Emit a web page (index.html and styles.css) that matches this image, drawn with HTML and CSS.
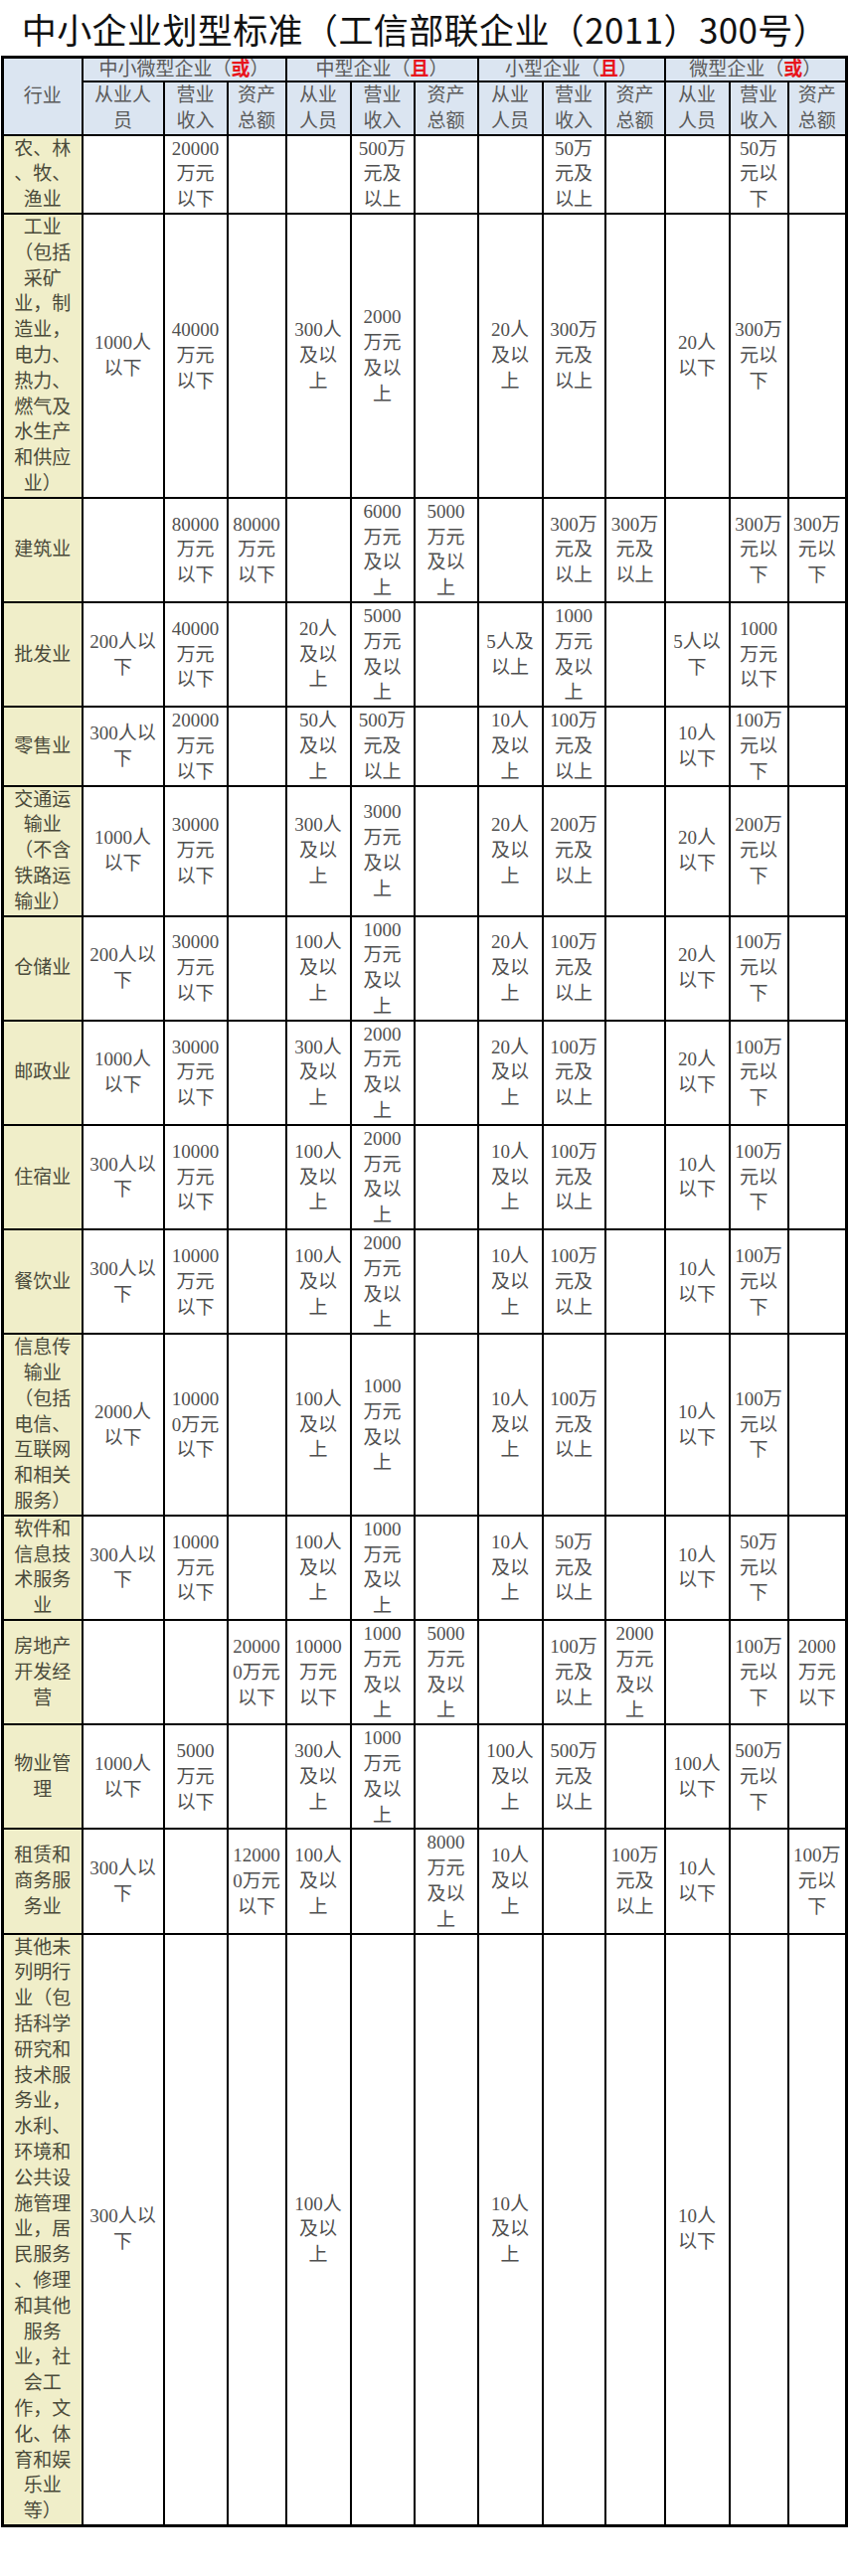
FILE: index.html
```html
<!DOCTYPE html>
<html lang="zh-CN">
<head>
<meta charset="utf-8">
<title>中小企业划型标准</title>
<link rel="stylesheet" href="styles.css">
</head>
<body>
<div class="title">中小企业划型标准（工信部联企业（2011）300号）</div>
<table class="grid">
<colgroup>
<col class="c-ind"><col class="c1"><col class="c2"><col class="c3"><col class="c4"><col class="c5"><col class="c6"><col class="c7"><col class="c8"><col class="c9"><col class="c10"><col class="c11"><col class="c12">
</colgroup>
<thead>
<tr class="hd1">
<th rowspan="2" class="hind">行业</th>
<th colspan="3">中小微型企业（<b class="red">或</b>）</th>
<th colspan="3">中型企业（<b class="red">且</b>）</th>
<th colspan="3">小型企业（<b class="red">且</b>）</th>
<th colspan="3">微型企业（<b class="red">或</b>）</th>
</tr>
<tr class="hd2">
<th>从业人<br>员</th><th>营业<br>收入</th><th>资产<br>总额</th>
<th>从业<br>人员</th><th>营业<br>收入</th><th>资产<br>总额</th>
<th>从业<br>人员</th><th>营业<br>收入</th><th>资产<br>总额</th>
<th>从业<br>人员</th><th>营业<br>收入</th><th>资产<br>总额</th>
</tr>
</thead>
<tbody>
<tr>
<td class="ind">农、林<br>、牧、<br>渔业</td>
<td></td><td>20000<br>万元<br>以下</td><td></td>
<td></td><td>500万<br>元及<br>以上</td><td></td>
<td></td><td>50万<br>元及<br>以上</td><td></td>
<td></td><td>50万<br>元以<br>下</td><td></td>
</tr>
<tr>
<td class="ind">工业<br>（包括<br>采矿<br>业，制<br>造业，<br>电力、<br>热力、<br>燃气及<br>水生产<br>和供应<br>业）</td>
<td>1000人<br>以下</td><td>40000<br>万元<br>以下</td><td></td>
<td>300人<br>及以<br>上</td><td>2000<br>万元<br>及以<br>上</td><td></td>
<td>20人<br>及以<br>上</td><td>300万<br>元及<br>以上</td><td></td>
<td>20人<br>以下</td><td>300万<br>元以<br>下</td><td></td>
</tr>
<tr>
<td class="ind">建筑业</td>
<td></td><td>80000<br>万元<br>以下</td><td>80000<br>万元<br>以下</td>
<td></td><td>6000<br>万元<br>及以<br>上</td><td>5000<br>万元<br>及以<br>上</td>
<td></td><td>300万<br>元及<br>以上</td><td>300万<br>元及<br>以上</td>
<td></td><td>300万<br>元以<br>下</td><td>300万<br>元以<br>下</td>
</tr>
<tr>
<td class="ind">批发业</td>
<td>200人以<br>下</td><td>40000<br>万元<br>以下</td><td></td>
<td>20人<br>及以<br>上</td><td>5000<br>万元<br>及以<br>上</td><td></td>
<td>5人及<br>以上</td><td>1000<br>万元<br>及以<br>上</td><td></td>
<td>5人以<br>下</td><td>1000<br>万元<br>以下</td><td></td>
</tr>
<tr>
<td class="ind">零售业</td>
<td>300人以<br>下</td><td>20000<br>万元<br>以下</td><td></td>
<td>50人<br>及以<br>上</td><td>500万<br>元及<br>以上</td><td></td>
<td>10人<br>及以<br>上</td><td>100万<br>元及<br>以上</td><td></td>
<td>10人<br>以下</td><td>100万<br>元以<br>下</td><td></td>
</tr>
<tr>
<td class="ind">交通运<br>输业<br>（不含<br>铁路运<br>输业）</td>
<td>1000人<br>以下</td><td>30000<br>万元<br>以下</td><td></td>
<td>300人<br>及以<br>上</td><td>3000<br>万元<br>及以<br>上</td><td></td>
<td>20人<br>及以<br>上</td><td>200万<br>元及<br>以上</td><td></td>
<td>20人<br>以下</td><td>200万<br>元以<br>下</td><td></td>
</tr>
<tr>
<td class="ind">仓储业</td>
<td>200人以<br>下</td><td>30000<br>万元<br>以下</td><td></td>
<td>100人<br>及以<br>上</td><td>1000<br>万元<br>及以<br>上</td><td></td>
<td>20人<br>及以<br>上</td><td>100万<br>元及<br>以上</td><td></td>
<td>20人<br>以下</td><td>100万<br>元以<br>下</td><td></td>
</tr>
<tr>
<td class="ind">邮政业</td>
<td>1000人<br>以下</td><td>30000<br>万元<br>以下</td><td></td>
<td>300人<br>及以<br>上</td><td>2000<br>万元<br>及以<br>上</td><td></td>
<td>20人<br>及以<br>上</td><td>100万<br>元及<br>以上</td><td></td>
<td>20人<br>以下</td><td>100万<br>元以<br>下</td><td></td>
</tr>
<tr>
<td class="ind">住宿业</td>
<td>300人以<br>下</td><td>10000<br>万元<br>以下</td><td></td>
<td>100人<br>及以<br>上</td><td>2000<br>万元<br>及以<br>上</td><td></td>
<td>10人<br>及以<br>上</td><td>100万<br>元及<br>以上</td><td></td>
<td>10人<br>以下</td><td>100万<br>元以<br>下</td><td></td>
</tr>
<tr>
<td class="ind">餐饮业</td>
<td>300人以<br>下</td><td>10000<br>万元<br>以下</td><td></td>
<td>100人<br>及以<br>上</td><td>2000<br>万元<br>及以<br>上</td><td></td>
<td>10人<br>及以<br>上</td><td>100万<br>元及<br>以上</td><td></td>
<td>10人<br>以下</td><td>100万<br>元以<br>下</td><td></td>
</tr>
<tr>
<td class="ind">信息传<br>输业<br>（包括<br>电信、<br>互联网<br>和相关<br>服务）</td>
<td>2000人<br>以下</td><td>10000<br>0万元<br>以下</td><td></td>
<td>100人<br>及以<br>上</td><td>1000<br>万元<br>及以<br>上</td><td></td>
<td>10人<br>及以<br>上</td><td>100万<br>元及<br>以上</td><td></td>
<td>10人<br>以下</td><td>100万<br>元以<br>下</td><td></td>
</tr>
<tr>
<td class="ind">软件和<br>信息技<br>术服务<br>业</td>
<td>300人以<br>下</td><td>10000<br>万元<br>以下</td><td></td>
<td>100人<br>及以<br>上</td><td>1000<br>万元<br>及以<br>上</td><td></td>
<td>10人<br>及以<br>上</td><td>50万<br>元及<br>以上</td><td></td>
<td>10人<br>以下</td><td>50万<br>元以<br>下</td><td></td>
</tr>
<tr>
<td class="ind">房地产<br>开发经<br>营</td>
<td></td><td></td><td>20000<br>0万元<br>以下</td>
<td>10000<br>万元<br>以下</td><td>1000<br>万元<br>及以<br>上</td><td>5000<br>万元<br>及以<br>上</td>
<td></td><td>100万<br>元及<br>以上</td><td>2000<br>万元<br>及以<br>上</td>
<td></td><td>100万<br>元以<br>下</td><td>2000<br>万元<br>以下</td>
</tr>
<tr>
<td class="ind">物业管<br>理</td>
<td>1000人<br>以下</td><td>5000<br>万元<br>以下</td><td></td>
<td>300人<br>及以<br>上</td><td>1000<br>万元<br>及以<br>上</td><td></td>
<td>100人<br>及以<br>上</td><td>500万<br>元及<br>以上</td><td></td>
<td>100人<br>以下</td><td>500万<br>元以<br>下</td><td></td>
</tr>
<tr>
<td class="ind">租赁和<br>商务服<br>务业</td>
<td>300人以<br>下</td><td></td><td>12000<br>0万元<br>以下</td>
<td>100人<br>及以<br>上</td><td></td><td>8000<br>万元<br>及以<br>上</td>
<td>10人<br>及以<br>上</td><td></td><td>100万<br>元及<br>以上</td>
<td>10人<br>以下</td><td></td><td>100万<br>元以<br>下</td>
</tr>
<tr>
<td class="ind">其他未<br>列明行<br>业（包<br>括科学<br>研究和<br>技术服<br>务业，<br>水利、<br>环境和<br>公共设<br>施管理<br>业，居<br>民服务<br>、修理<br>和其他<br>服务<br>业，社<br>会工<br>作，文<br>化、体<br>育和娱<br>乐业<br>等）</td>
<td>300人以<br>下</td><td></td><td></td>
<td>100人<br>及以<br>上</td><td></td><td></td>
<td>10人<br>及以<br>上</td><td></td><td></td>
<td>10人<br>以下</td><td></td><td></td>
</tr>
</tbody>
</table>
</body>
</html>
```
FILE: styles.css
```css
html, body {
  margin: 0;
  padding: 0;
  background: #ffffff;
}

.title {
  height: 56px;
  line-height: 58px;
  text-align: center;
  font-family: "Noto Sans CJK SC", sans-serif;
  font-size: 35px;
  font-weight: 400;
  letter-spacing: 0.4px;
  color: #111111;
  white-space: nowrap;
}

.grid {
  margin-left: 1px;
  width: 852px;
  table-layout: fixed;
  border-collapse: collapse;
  border: 3px solid #000000;
  font-family: "Liberation Serif", "Noto Sans CJK SC", serif;
  font-size: 19px;
  color: #505050;
}

.c-ind { width: 80px; }
.c1 { width: 82px; }
.c2 { width: 64px; }
.c3 { width: 59px; }
.c4 { width: 65px; }
.c5 { width: 64px; }
.c6 { width: 64px; }
.c7 { width: 65px; }
.c8 { width: 63px; }
.c9 { width: 60px; }
.c10 { width: 65px; }
.c11 { width: 59px; }
.c12 { width: 59px; }

.grid th,
.grid td {
  border: 2px solid #000000;
  padding: 0;
  text-align: center;
  vertical-align: middle;
  white-space: nowrap;
  line-height: 25.8px;
  font-weight: 400;
}

.grid th {
  background: #dbe5f1;
  color: #5a5a5a;
}

.hd1 th {
  line-height: 22px;
}

.grid td.ind {
  background: #f0eec9;
  color: #4a4a3a;
}

.red {
  color: #e8141c;
  font-weight: 700;
}
```
